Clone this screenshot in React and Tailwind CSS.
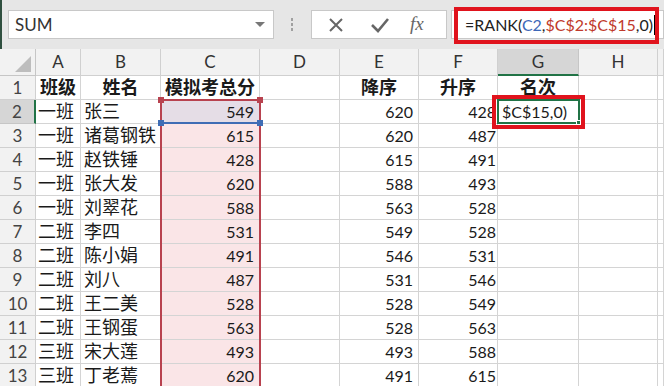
import React from 'react';

const cols = ['A', 'B', 'C', 'D', 'E', 'F', 'G', 'H', ''];

const rows = [
  ['一班', '张三', '549', '620', '428'],
  ['一班', '诸葛钢铁', '615', '620', '487'],
  ['一班', '赵铁锤', '428', '615', '491'],
  ['一班', '张大发', '620', '588', '493'],
  ['一班', '刘翠花', '588', '563', '528'],
  ['二班', '李四', '531', '549', '528'],
  ['二班', '陈小娟', '491', '546', '531'],
  ['二班', '刘八', '487', '531', '546'],
  ['二班', '王二美', '528', '528', '549'],
  ['二班', '王钢蛋', '563', '528', '563'],
  ['三班', '宋大莲', '493', '493', '588'],
  ['三班', '丁老蔫', '620', '491', '615'],
];

const cell = 'h-[24px] border-r border-b border-[#d4d4d4] flex items-center overflow-visible whitespace-nowrap';

const App = () => {
  return (
    <div className="w-[664px] h-[386px] overflow-hidden bg-white relative font-['Lato','Noto_Sans_CJK_SC',sans-serif] text-[#1a1a1a]">
      {/* Formula bar */}
      <div className="h-[49px] bg-[#e6e6e6] flex items-center border-l-2 border-[#2f4f3f]">
        <div className="ml-[6px] w-[266px] h-[29px] bg-white border border-[#c8c8c8] flex items-center justify-between pl-[6px] pr-[8px]">
          <span className="text-[17px] text-[#333]">SUM</span>
          <span className="w-0 h-0 border-l-[5px] border-r-[5px] border-t-[5px] border-l-transparent border-r-transparent border-t-[#777]"></span>
        </div>
        <div className="ml-[17px] flex flex-col gap-[2px]">
          <span className="w-[2px] h-[3px] bg-[#a0a0a0]"></span>
          <span className="w-[2px] h-[3px] bg-[#a0a0a0]"></span>
          <span className="w-[2px] h-[3px] bg-[#a0a0a0]"></span>
        </div>
        <div className="ml-[18px] w-[136px] h-[29px] bg-white border border-[#c8c8c8] flex items-center">
          <svg width="44" height="20" viewBox="0 0 44 20" className="ml-[2px]">
            <path d="M16 4 L28 16 M28 4 L16 16" stroke="#666" strokeWidth="2" fill="none" />
          </svg>
          <svg width="44" height="20" viewBox="0 0 44 20">
            <path d="M14 10 L20 16 L30 4" stroke="#666" strokeWidth="2.6" fill="none" />
          </svg>
          <span className="ml-[8px] font-['Liberation_Serif',serif] italic text-[19px] text-[#666]">fx</span>
        </div>
        <div className="ml-[4px] flex-1 h-[29px] bg-white border border-[#c8c8c8] relative flex items-center pl-[13px]">
          <span className="text-[16px] text-[#222]">
            =RANK(<span className="text-[#3c67b8]">C2</span>,<span className="text-[#c0392b]">$C$2:$C$15</span>,0)
          </span>
          <span className="w-[1px] h-[20px] bg-black ml-[1px]"></span>
          <div className="absolute left-[2px] top-[-4px] w-[205px] h-[37px] border-[4px] border-[#e0131d]"></div>
        </div>
      </div>

      {/* Sheet grid */}
      <div className="grid grid-cols-[36px_45px_80px_99px_80px_79px_79px_81px_79px_6px] relative">
        {/* header row */}
        <div className="h-[27px] bg-[#f2f2f2] border-r border-b border-[#c6c6c6] flex items-end justify-end pr-[4px] pb-[3px]">
          <span className="w-0 h-0 border-l-[16px] border-b-[16px] border-l-transparent border-b-[#bdbdbd]"></span>
        </div>
        {cols.map((c, i) => (
          <div
            key={i}
            className={
              c === 'G'
                ? 'h-[27px] bg-[#d6d6d6] border-r border-[#c6c6c6] border-b-2 border-b-[#217346] flex items-center justify-center text-[17px] text-[#333]'
                : 'h-[27px] bg-[#f2f2f2] border-r border-b border-[#d0d0d0] flex items-center justify-center text-[17px] text-[#333]'
            }
          >
            {c}
          </div>
        ))}

        {/* row 1 */}
        <div className="h-[24px] bg-[#f2f2f2] border-r border-b border-[#d0d0d0] flex items-center justify-center text-[17px] text-[#444]">1</div>
        <div className={cell + ' justify-center text-[18px] font-bold'}>班级</div>
        <div className={cell + ' justify-center text-[18px] font-bold'}>姓名</div>
        <div className={cell + ' justify-center text-[18px] font-bold'}>模拟考总分</div>
        <div className={cell}></div>
        <div className={cell + ' justify-center text-[18px] font-bold'}>降序</div>
        <div className={cell + ' justify-center text-[18px] font-bold'}>升序</div>
        <div className={cell + ' justify-center text-[18px] font-bold'}>名次</div>
        <div className={cell}></div>
        <div className={cell}></div>

        {rows.map((r, i) => (
          <React.Fragment key={i}>
            <div
              className={
                i === 0
                  ? 'h-[24px] bg-[#d6d6d6] border-r-2 border-r-[#217346] border-b border-[#c6c6c6] flex items-center justify-center text-[17px] text-[#444]'
                  : 'h-[24px] bg-[#f2f2f2] border-r border-b border-[#d0d0d0] flex items-center justify-center text-[17px] text-[#444]'
              }
            >
              {i + 2}
            </div>
            <div className={cell + ' pl-[2px] text-[18px]'}>{r[0]}</div>
            <div className={cell + ' pl-[3px] text-[18px]'}>{r[1]}</div>
            <div className={cell + ' justify-end pr-[5px] text-[16px] ' + (i === 0 ? 'bg-[#e5dde6]' : 'bg-[#fae5e7]')}>{r[2]}</div>
            <div className={cell}></div>
            <div className={cell + ' justify-end pr-[5px] text-[16px]'}>{r[3]}</div>
            <div className={cell + ' justify-end pr-[1px] text-[16px]'}>{r[4]}</div>
            <div className={cell + ' pl-[4px] text-[16px]'}>{i === 0 ? '$C$15,0)' : ''}</div>
            <div className={cell}></div>
            <div className={cell}></div>
          </React.Fragment>
        ))}

        {/* C2:C15 reference range */}
        <div className="absolute left-[160px] top-[50px] w-[101px] h-[340px] border-2 border-[#b8424f] pointer-events-none">
          <span className="absolute left-[-4px] top-[-4px] w-[6px] h-[6px] bg-[#b8424f]"></span>
          <span className="absolute right-[-4px] top-[-4px] w-[6px] h-[6px] bg-[#b8424f]"></span>
          <span className="absolute left-0 right-0 top-[21px] h-[2px] bg-[#3f6db5]"></span>
          <span className="absolute left-[-4px] top-[19px] w-[6px] h-[6px] bg-[#3f6db5]"></span>
          <span className="absolute right-[-4px] top-[19px] w-[6px] h-[6px] bg-[#3f6db5]"></span>
        </div>

        {/* active cell G2 */}
        <div className="absolute left-[497px] top-[50px] w-[83px] h-[25px] border-2 border-[#217346] pointer-events-none">
          <span className="absolute right-[-3px] bottom-[-3px] w-[5px] h-[5px] bg-[#217346] border border-white"></span>
        </div>
        <div className="absolute left-[492px] top-[46px] w-[93px] h-[34px] border-[4px] border-[#e0131d] pointer-events-none"></div>
      </div>
    </div>
  );
};

export default App;
